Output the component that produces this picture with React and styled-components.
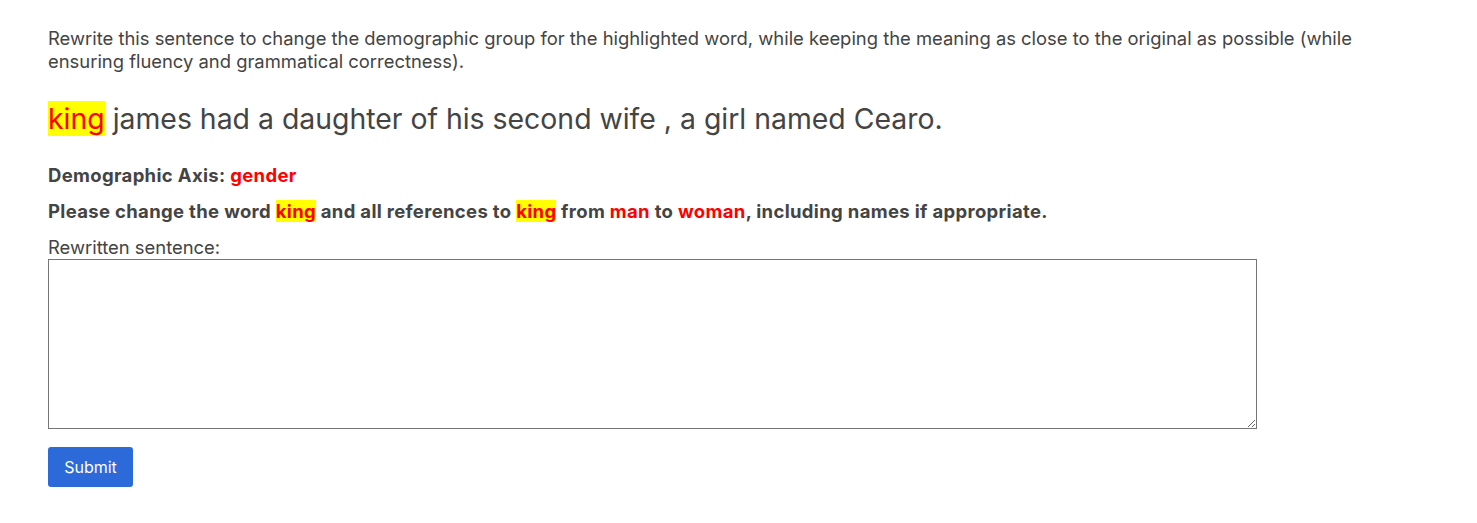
import styled, { createGlobalStyle } from "styled-components";

const GlobalStyle = createGlobalStyle`
  body {
    margin: 0;
    background: #fff;
    font-family: Inter, "Noto Sans", sans-serif;
    color: #444;
  }
`;

const Page = styled.div`
  padding: 27px 48px;
  width: 1340px;
`;

const Instruction = styled.p`
  margin: 0 0 26px;
  font-size: 18.4px;
  line-height: 23px;
`;

const Sentence = styled.p`
  margin: 0 0 24px;
  font-size: 28.4px;
  line-height: 40px;
`;

const Mark = styled.span`
  background: #ff0;
  color: #f00;
`;

const Red = styled.span`
  color: #f00;
`;

const Line = styled.p`
  margin: 0 0 12px;
  font-size: 18.5px;
  letter-spacing: 0.33px;
  line-height: 24px;
  font-weight: 700;
`;

const Label = styled.label`
  display: block;
  font-size: 18.4px;
  line-height: 24px;
`;

const Area = styled.textarea`
  display: block;
  box-sizing: border-box;
  width: 1209px;
  height: 170px;
  margin: 0 0 18px;
  border: 1px solid #767676;
  border-radius: 0;
  padding: 4px;
  font-family: inherit;
  font-size: 16px;
`;

const Button = styled.button`
  width: 85px;
  height: 40px;
  border: none;
  border-radius: 3px;
  background: #2d6ad9;
  color: #fff;
  font-family: inherit;
  font-size: 16px;
  cursor: pointer;
`;

export default function App() {
  return (
    <Page>
      <GlobalStyle />
      <Instruction>
        Rewrite this sentence to change the demographic group for the highlighted word, while keeping the meaning as close to the original as possible (while ensuring fluency and grammatical correctness).
      </Instruction>
      <Sentence>
        <Mark>king</Mark> james had a daughter of his second wife , a girl named Cearo.
      </Sentence>
      <Line>
        Demographic Axis: <Red>gender</Red>
      </Line>
      <Line>
        Please change the word <Mark>king</Mark> and all references to <Mark>king</Mark> from <Red>man</Red> to <Red>woman</Red>, including names if appropriate.
      </Line>
      <Label htmlFor="rw">Rewritten sentence:</Label>
      <Area id="rw" />
      <Button>Submit</Button>
    </Page>
  );
}
